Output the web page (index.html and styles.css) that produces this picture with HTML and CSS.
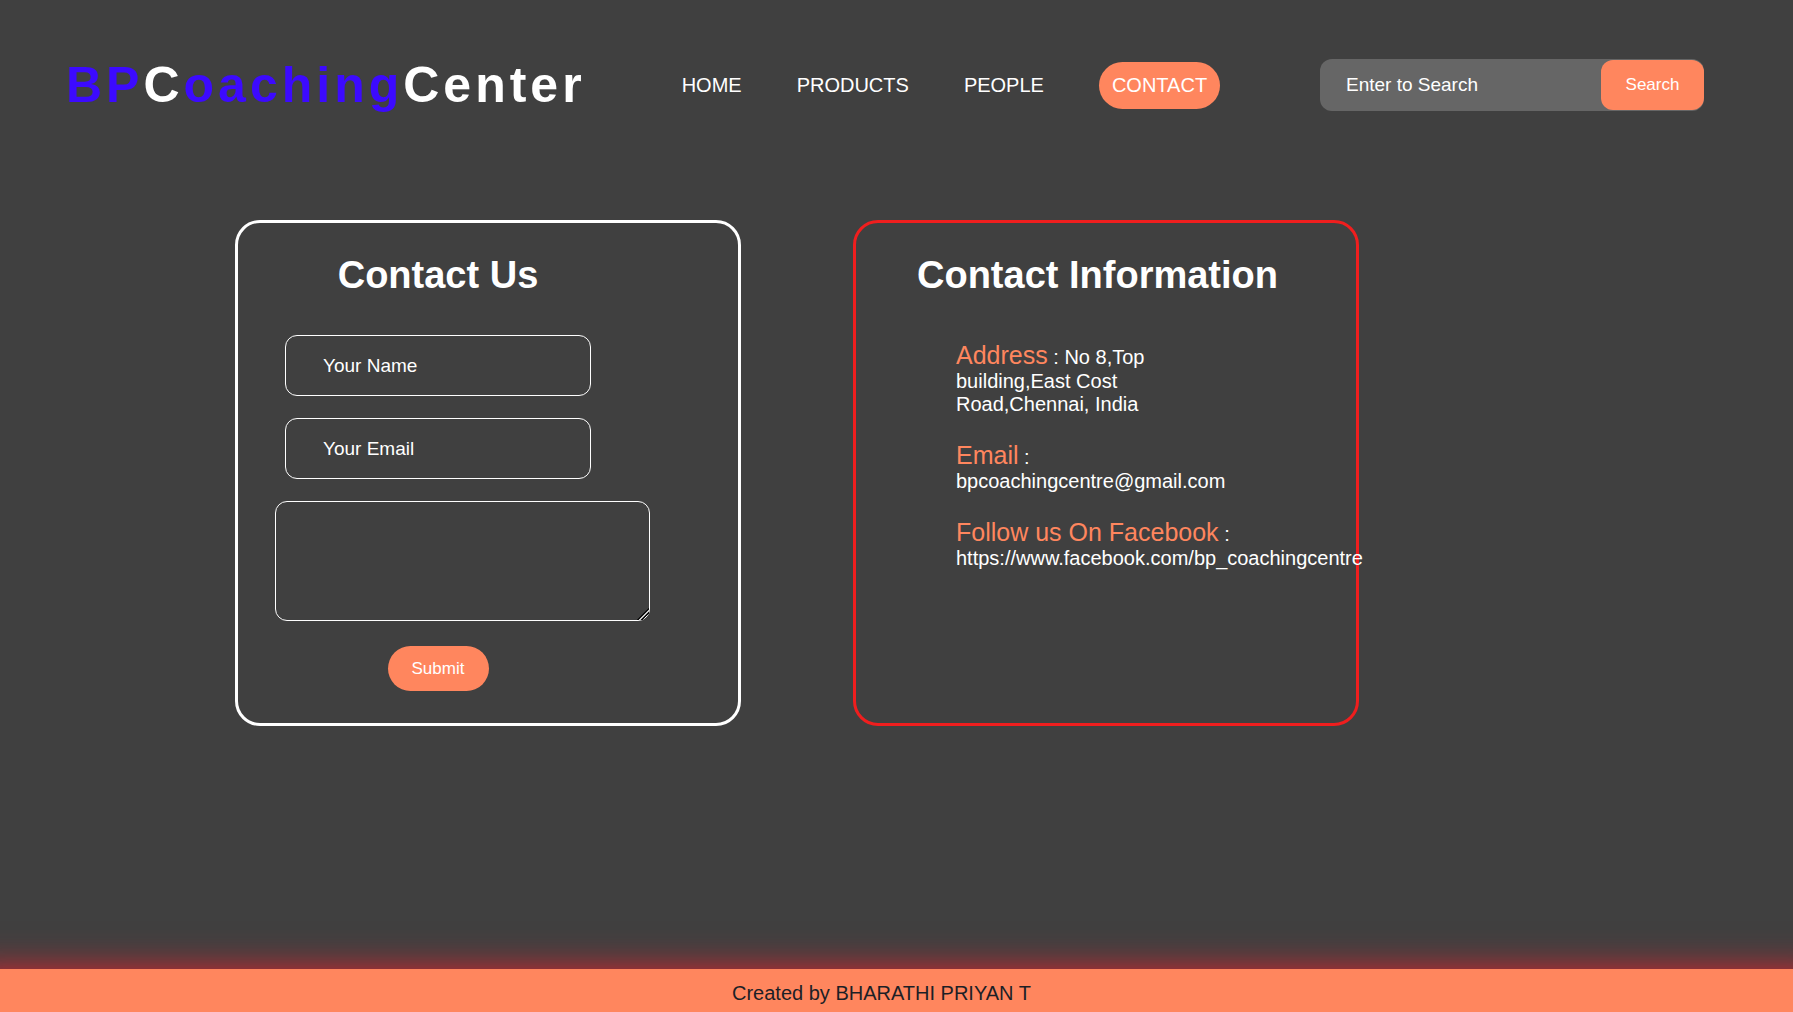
FILE: index.html
```html
<!DOCTYPE html>
<html lang="en">
<head>
<meta charset="utf-8">
<meta name="viewport" content="width=device-width, initial-scale=1">
<title>BPCoachingCenter - Contact</title>
<link rel="stylesheet" href="styles.css">
</head>
<body>
<header class="topbar">
  <div class="logo">BP<span class="logo-light">C</span>oaching<span class="logo-light">Center</span></div>
  <nav class="nav">
    <a href="#home">HOME</a>
    <a href="#products">PRODUCTS</a>
    <a href="#people">PEOPLE</a>
    <a class="active" href="#contact">CONTACT</a>
  </nav>
  <form class="search">
    <input type="search" placeholder="Enter to Search" aria-label="Search">
    <button type="submit">Search</button>
  </form>
</header>
<main class="cards">
  <section class="card">
    <form class="contact-form">
      <h1>Contact Us</h1>
      <input type="text" placeholder="Your Name" aria-label="Your Name">
      <input type="email" placeholder="Your Email" aria-label="Your Email">
      <textarea aria-label="Message"></textarea>
      <button type="submit">Submit</button>
    </form>
  </section>
  <section class="card card-info">
    <h1>Contact Information</h1>
    <div class="details">
      <p><span class="term">Address</span> : No 8,Top building,East Cost Road,Chennai, India</p>
      <p><span class="term">Email</span> : bpcoachingcentre@gmail.com</p>
      <p><span class="term">Follow us On Facebook</span> : https://www.facebook.com/bp_coachingcentre</p>
    </div>
  </section>
</main>
<footer class="footer">Created by BHARATHI PRIYAN T</footer>
</body>
</html>
```
FILE: styles.css
```css
* {
  box-sizing: border-box;
}

body {
  margin: 0;
  min-height: 100vh;
  display: flex;
  flex-direction: column;
  overflow-x: hidden;
  background: #404040;
  color: #fff;
  font-family: "Liberation Sans", Arial, sans-serif;
  font-size: 20px;
}

input,
textarea,
button {
  font-family: inherit;
  color: #fff;
}

input::placeholder {
  color: #fff;
  opacity: 1;
}

button {
  border: 0;
  background: #ff865e;
  font-size: 17px;
  cursor: pointer;
}

.topbar {
  display: flex;
  align-items: center;
  padding: 56px 89px 56px 66px;
}

.logo {
  color: #3c0aff;
  font-size: 50px;
  font-weight: bold;
  line-height: 58px;
  letter-spacing: 4px;
}

.logo-light {
  color: #fff;
}

.nav {
  display: flex;
  align-items: center;
  gap: 55px;
  margin-left: 96px;
}

.nav a {
  color: #fff;
  text-decoration: none;
}

.nav .active {
  padding: 12px 13px;
  border-radius: 25px;
  background: #ff865e;
}

.search {
  display: flex;
  align-items: center;
  width: 384px;
  height: 52px;
  margin-left: auto;
  border-radius: 12px;
  background: #666;
}

.search input {
  flex: 1;
  min-width: 0;
  padding: 0 26px;
  border: 0;
  background: none;
  font-size: 19px;
}

.search button {
  width: 103px;
  height: 50px;
  border-radius: 12px;
}

.cards {
  flex: 1;
  display: flex;
  align-items: flex-start;
  gap: 112px;
  padding: 50px 235px;
}

.card {
  width: 506px;
  min-height: 506px;
  border: 3px solid #fff;
  border-radius: 25px;
}

.card-info {
  border-color: #f01e1e;
}

h1 {
  margin: 30px 0 38px;
  font-size: 38px;
  line-height: 44px;
}

.contact-form {
  display: flex;
  flex-direction: column;
  align-items: center;
  width: 326px;
  margin-left: 37px;
}

.contact-form input,
.contact-form textarea {
  border: 1px solid #fff;
  border-radius: 12px;
  background: none;
  font-size: 19px;
}

.contact-form input {
  width: 306px;
  height: 61px;
  margin-bottom: 22px;
  padding: 0 37px;
}

.contact-form textarea {
  align-self: flex-start;
  width: 375px;
  height: 120px;
  padding: 12px;
}

.contact-form textarea::-webkit-resizer {
  background: linear-gradient(135deg, transparent 58%, #111 58%, #111 65%, #ccc 65%, #ccc 73%, #111 73%, #111 79%, transparent 79%);
}

.contact-form button {
  width: 101px;
  height: 45px;
  margin-top: 25px;
  border-radius: 25px;
}

.card-info h1 {
  margin-left: 61px;
}

.details {
  width: 280px;
  margin-left: 100px;
  padding-top: 6px;
}

.details p {
  margin: 0 0 25px;
}

.term {
  color: #ff865e;
  font-size: 25px;
}

.footer {
  padding: 13px 30px 7px 0;
  background: #ff865e;
  box-shadow: 0 30px 32px 30px #d8242f;
  color: #1c1f26;
  line-height: 23px;
  text-align: center;
}
```
